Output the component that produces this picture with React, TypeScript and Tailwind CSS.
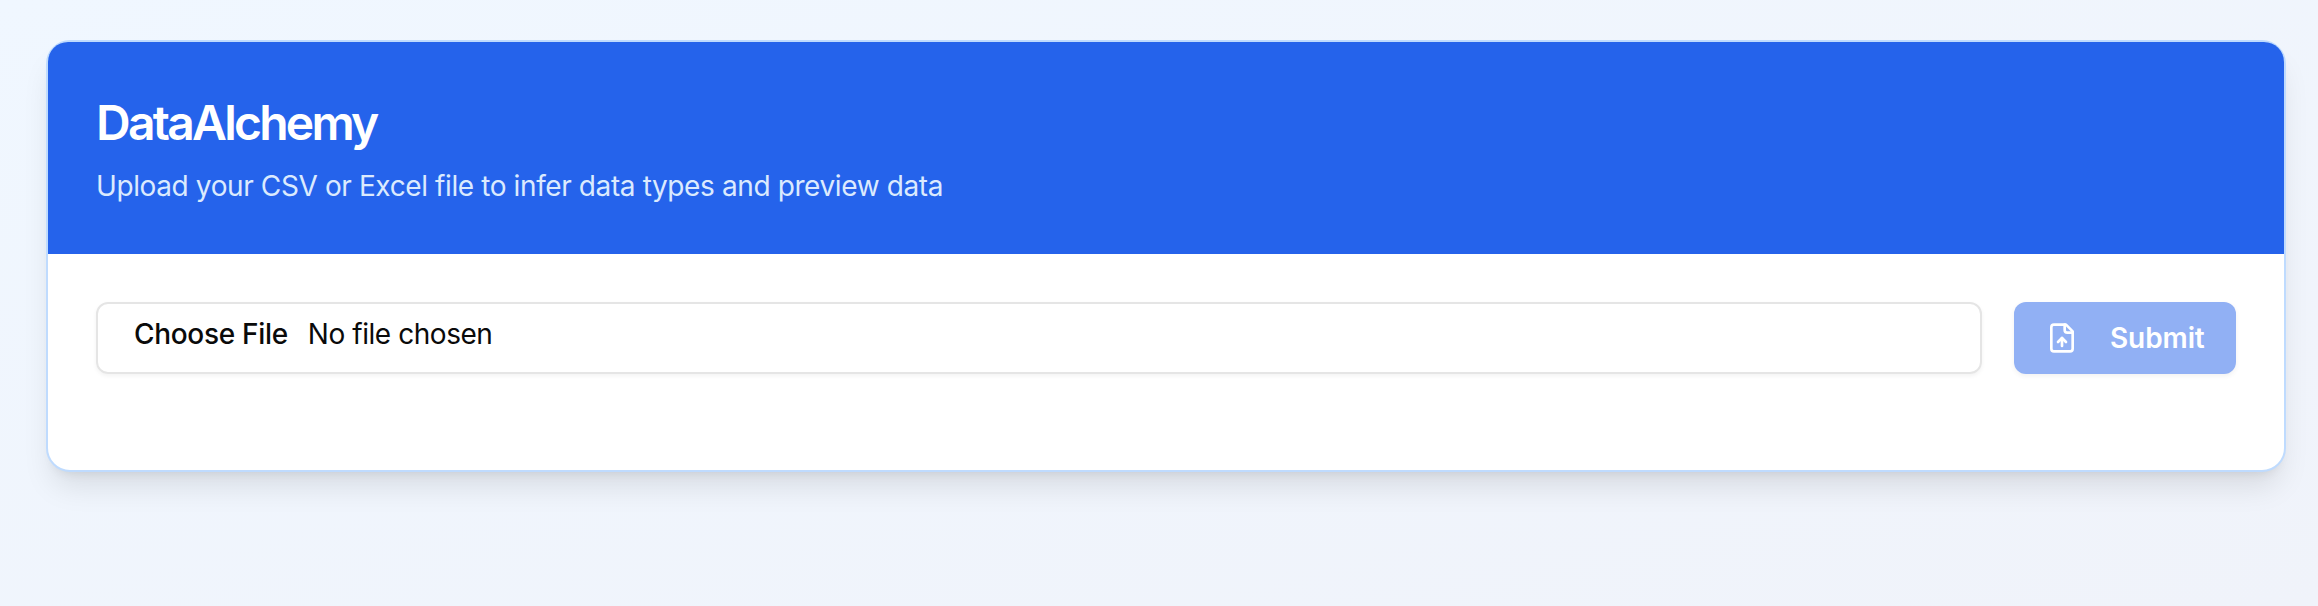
import { useRef, useState } from "react";

const FileUpIcon: React.FunctionComponent = () => (
  <svg
    className="h-8 w-8 shrink-0"
    viewBox="0 0 24 24"
    fill="none"
    stroke="currentColor"
    strokeWidth="2"
    strokeLinecap="round"
    strokeLinejoin="round"
  >
    <path d="M15 2H6a2 2 0 0 0-2 2v16a2 2 0 0 0 2 2h12a2 2 0 0 0 2-2V7Z" />
    <path d="M14 2v4a2 2 0 0 0 2 2h4" />
    <path d="M12 12v6" />
    <path d="m15 15-3-3-3 3" />
  </svg>
);

const App: React.FunctionComponent = () => {
  const inputRef = useRef<HTMLInputElement>(null);
  const [fileName, setFileName] = useState<string>("");

  return (
    <div className="min-h-screen bg-linear-to-br from-[#f0f7ff] to-[#f0f3fa] px-[46px] pt-10 pr-8 font-['Inter',sans-serif]">
      <div className="h-[432px] w-[2240px] rounded-3xl border-2 border-[#bfdbfe] bg-white shadow-[0_20px_30px_-6px_rgba(0,0,0,0.1),0_8px_12px_-8px_rgba(0,0,0,0.1)]">
        <div className="flex h-[212px] flex-col gap-3 rounded-t-[20px] bg-[#2563eb] p-12">
          <h1 className="pt-0.5 text-5xl leading-[62px] font-semibold tracking-[-2.75px] text-white">
            DataAlchemy
          </h1>
          <p className="text-[28px] leading-10 tracking-[-0.39px] text-[#dbeafe]">
            Upload your CSV or Excel file to infer data types and preview data
          </p>
        </div>
        <div className="flex gap-8 p-12">
          <label className="flex h-[72px] flex-1 cursor-pointer items-start rounded-xl border-2 border-[#e5e5e5] pt-2.5 pl-9 text-[28px] leading-10 text-[#0a0a0a] shadow-[0_2px_4px_rgba(0,0,0,0.05)]">
            <input
              ref={inputRef}
              type="file"
              className="hidden"
              onChange={(e) => setFileName(e.target.files?.[0]?.name ?? "")}
            />
            <span className="mr-5 font-medium tracking-[-0.31px]">Choose File</span>
            <span className="tracking-[-0.45px]">{fileName || "No file chosen"}</span>
          </label>
          <button
            disabled={!fileName}
            className="flex h-[72px] w-[222px] items-center gap-8 rounded-xl bg-[#2563eb] pl-8 text-[28px] font-[560] tracking-[-0.1px] text-white shadow-[0_2px_4px_rgba(0,0,0,0.1)] disabled:opacity-50"
          >
            <FileUpIcon />
            Submit
          </button>
        </div>
      </div>
    </div>
  );
};

export default App;
